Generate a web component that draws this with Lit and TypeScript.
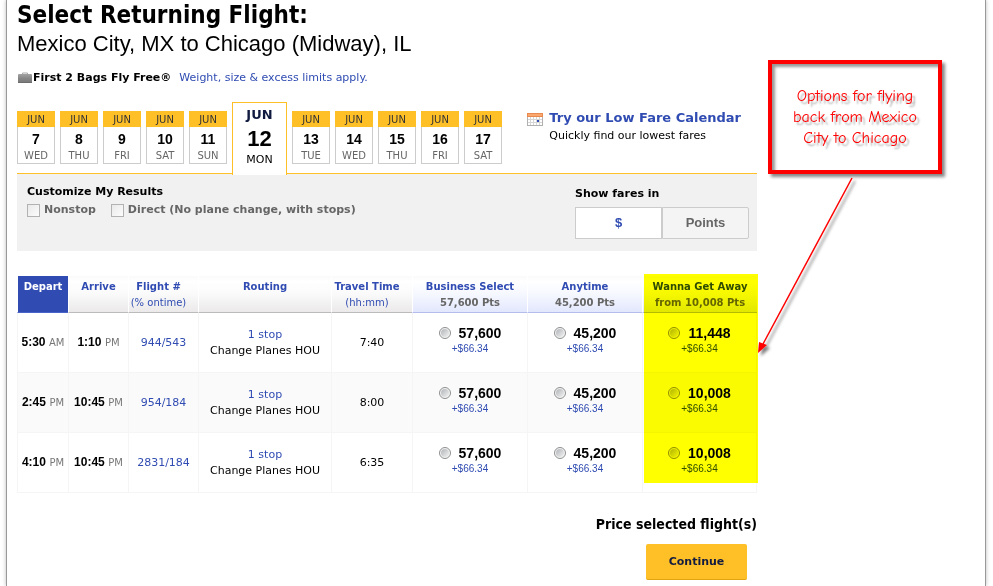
import { LitElement, html, css, svg } from "lit";
import { customElement, state } from "lit/decorators.js";
import { classMap } from "lit/directives/class-map.js";

interface Day { date: number; name: string; }
interface Fare { id: string; pts: string; }
interface Flight {
  depart: [string, string];
  arrive: [string, string];
  number: string;
  time: string;
  fares: Fare[];
}

const DAYS: Day[] = [
  { date: 7, name: "WED" }, { date: 8, name: "THU" }, { date: 9, name: "FRI" },
  { date: 10, name: "SAT" }, { date: 11, name: "SUN" }, { date: 12, name: "MON" },
  { date: 13, name: "TUE" }, { date: 14, name: "WED" }, { date: 15, name: "THU" },
  { date: 16, name: "FRI" }, { date: 17, name: "SAT" },
];

const fares = (wanna: string): Fare[] => [
  { id: "Business Select", pts: "57,600" },
  { id: "Anytime", pts: "45,200" },
  { id: "Wanna Get Away", pts: wanna },
];

const FLIGHTS: Flight[] = [
  { depart: ["5:30", "AM"], arrive: ["1:10", "PM"], number: "944/543", time: "7:40", fares: fares("11,448") },
  { depart: ["2:45", "PM"], arrive: ["10:45", "PM"], number: "954/184", time: "8:00", fares: fares("10,008") },
  { depart: ["4:10", "PM"], arrive: ["10:45", "PM"], number: "2831/184", time: "6:35", fares: fares("10,008") },
];

const bagIcon = svg`<svg class="bag" width="16" height="12" viewBox="0 0 16 12" aria-hidden="true">
  <defs>
    <linearGradient id="leather" x2="0" y2="1">
      <stop offset="0" stop-color="#a2a2a2" /><stop offset="0.5" stop-color="#868686" /><stop offset="1" stop-color="#777" />
    </linearGradient>
  </defs>
  <path d="M5.5 3V1h5v2" fill="none" stroke="#a8a8a8"/>
  <rect x="1" y="2" width="14" height="9" rx="1" fill="url(#leather)"/>
  <path d="M1 10.5h14" stroke="#6c6c6c"/>
</svg>`;

const calendarIcon = svg`<svg class="cal" width="16" height="13" viewBox="0 0 16 13" aria-hidden="true">
  <rect width="16" height="13" fill="#b0b0b0"/>
  <rect width="16" height="4" fill="#e8894f"/>
  <rect x="1" y="1" width="14" height="2" fill="#fba86f"/>
  <rect x="1" y="4" width="14" height="8" fill="#fff"/>
  <path d="M3.5 4v8M6.5 4v8M9.5 4v8M12.5 4v8M1 6.5h14M1 9.5h14" stroke="#d6d6d6"/>
  <rect x="10" y="7" width="2" height="2" fill="#304cb2"/>
</svg>`;

@customElement("app-root")
export class AppRoot extends LitElement {
  @state() private selectedDate = 12;
  @state() private unit = "$";

  static styles = css`
    :host {
      display: block;
      background: #fff;
      color: #000;
      font: 11px/16px "DejaVu Sans", Verdana, sans-serif;
      --blue: #304cb2;
      --gold: #ffbf27;
      --arial: "Liberation Sans", Arial, sans-serif;
      --tahoma: "DejaVu Sans Condensed", Tahoma, sans-serif;
    }
    * { box-sizing: border-box; }
    a { color: var(--blue); text-decoration: none; }
    button { cursor: pointer; }
    h1, h2, p, fieldset { margin: 0; padding: 0; border: 0; }

    .page {
      display: grid;
      grid-template-columns: minmax(0, 1fr) 207px;
      column-gap: 11px;
      margin: 0 7px 0 6px;
      padding: 0 10px 6px;
      border: solid #999;
      border-width: 0 1px;
      box-shadow: 0 0 4px #bbb;
    }
    h1 { font: bold 24px/31px var(--tahoma); }
    h2 { font: 22px/26px var(--arial); }

    .bags { display: flex; align-items: center; margin-top: 13px; }
    .bag { flex: none; }
    .bags a { margin-left: 8px; }

    .dates {
      display: flex;
      align-items: flex-start;
      height: 72px;
      margin-top: 16px;
      border-bottom: 1px solid var(--gold);
    }
    .days { display: flex; align-items: flex-start; gap: 5px; }
    .day {
      display: flex;
      flex-direction: column;
      width: 38px;
      height: 53px;
      margin-top: 9px;
      padding: 0;
      border: 1px solid #ccc;
      border-top: 0;
      background: #fff;
      font: inherit;
      text-align: center;
      color: #666;
      font-size: 10px;
    }
    .month { height: 16px; margin: 0 -1px; background: var(--gold); color: #333; line-height: 18px; }
    .num { font: bold 14px/24px var(--arial); color: #000; }
    .name { line-height: 10px; }
    .day.on {
      position: relative;
      width: 55px;
      height: 73px;
      margin-top: 0;
      border: 1px solid var(--gold);
      border-bottom: 0;
      color: #000;
      font-size: 11px;
    }
    .on .month { height: 24px; background: none; color: #111b40; font-weight: bold; font-size: 13px; line-height: 24px; }
    .on .num { font-size: 22px; }
    .on .name { line-height: 18px; }

    .lowfare { display: flex; gap: 6px; margin: 7px 16px 0 auto; }
    .cal { flex: none; margin-top: 4px; }
    .lowfare a { font-weight: bold; font-size: 13px; line-height: 18px; }
    .lowfare p { line-height: 18px; }

    .filters {
      display: flex;
      justify-content: space-between;
      min-height: 77px;
      padding: 10px 8px 12px 10px;
      background: #f1f1f1;
      font-weight: bold;
    }
    .checks { display: flex; gap: 15px; margin-top: 2px; color: #666; }
    .checks label { display: flex; align-items: center; gap: 4px; }
    input { appearance: none; margin: 0; flex: none; }
    input[type="checkbox"] {
      width: 13px; height: 13px;
      border: 1px solid #b2b2b2;
      background: linear-gradient(135deg, #e9e9e9, #fcfcfc);
    }
    .units { padding-top: 2px; }
    .switch { display: flex; width: 174px; margin-top: 5px; }
    .switch button {
      flex: 1;
      height: 32px;
      border: 1px solid #ccc;
      background: #f4f4f4;
      color: #666;
      font: bold 13px/16px var(--arial);
    }
    .switch button + button { border-radius: 0 2px 2px 0; }
    .switch .on { background: #fff; color: var(--blue); }

    .results { position: relative; margin-top: 25px; }
    table { width: 100%; table-layout: fixed; border-spacing: 0; text-align: center; }
    th, td { padding: 0; border-left: 1px solid #f5f5f5; }
    th {
      height: 37px;
      border-left-color: #fff;
      border-bottom: 1px solid #bbb;
      background: linear-gradient(#fafafa, #fff 15%, #fafafa 50%, #ebe9e9);
      color: var(--blue);
      font-size: 10px;
      vertical-align: top;
      padding-top: 3px;
      white-space: nowrap;
    }
    th.fare { background: linear-gradient(#fafafa, #fff 15%, #f6f8ff 50%, #e2e7fd); border-bottom-color: #b3bcea; }
    th.sorted { background: var(--blue); border-bottom-color: #4a63c8; color: #fff; }
    th.sortable { padding-right: 10px; }
    th small { display: block; font-size: 10px; font-weight: normal; }
    th.fare small { color: #666; font-weight: bold; }
    td { height: 60px; border-bottom: 1px solid #f5f5f5; white-space: nowrap; }
    td:last-child { border-right: 1px solid #f5f5f5; }
    tr:nth-child(even) td { background: #fafafa; }
    .clock { font: bold 12px/16px var(--arial); }
    .ampm { font: 10px/16px "DejaVu Sans", sans-serif; color: #777; }
    .c1 { width: 51px; } .c2 { width: 60px; } .c3 { width: 70px; } .c4 { width: 133px; }
    .c5 { width: 81px; } .c6 { width: 115px; }
    .pick { display: flex; align-items: center; justify-content: center; gap: 8px; font: bold 14px/16px var(--arial); }
    input[type="radio"] {
      width: 12px; height: 12px;
      padding: 1px;
      border: 1px solid #8e8f8f;
      border-radius: 50%;
      background: linear-gradient(135deg, #b0b4b8, #f2f2f2) content-box, #f4f4f4;
    }
    input[type="radio"]:checked { background: radial-gradient(#304cb2 40%, #f4f4f4 45%); }
    .tax { margin-bottom: 4px; color: var(--blue); font: 10px/16px var(--arial); }
    .marker {
      position: absolute;
      top: -2px; right: -1px; bottom: 10px;
      width: 114px;
      background: #ff0;
      mix-blend-mode: multiply;
      pointer-events: none;
    }

    .checkout { display: flex; flex-direction: column; align-items: flex-end; margin-top: 21px; }
    .checkout p { font: bold 14px/20px var(--tahoma); }
    .continue {
      width: 101px; height: 36px;
      margin: 10px 10px 0 0;
      border: 0;
      border-bottom: 1px solid #dfa410;
      border-radius: 2px;
      background: var(--gold);
      color: #111b40;
      font: bold 11px/16px "DejaVu Sans", sans-serif;
    }

    aside { position: relative; padding-top: 60px; }
    .note {
      display: grid;
      place-items: center;
      width: 174px;
      height: 114px;
      border: 4px solid #f00;
      box-shadow: 3px 3px 3px #888, inset 3px 3px 3px #999;
      color: #f00;
      font: 16px/21px "Comic Sans MS", "Comic Neue", cursive;
      text-align: center;
      text-shadow: 3px 3px 2px #aaa;
    }
    .arrow { position: absolute; left: -18px; top: 170px; pointer-events: none; }
  `;

  private day(d: Day) {
    const on = d.date === this.selectedDate;
    return html`<button class=${classMap({ day: true, on })} @click=${() => (this.selectedDate = d.date)}>
      <span class="month">JUN</span><span class="num">${d.date}</span><span class="name">${d.name}</span>
    </button>`;
  }

  private fare(f: Fare, row: number) {
    return html`<td>
      <label class="pick"><input type="radio" name="fare" value="${f.id} ${row}" />${f.pts}</label>
      <p class="tax">+$66.34</p>
    </td>`;
  }

  private flight(f: Flight, row: number) {
    return html`<tr>
      <td><span class="clock">${f.depart[0]}</span> <span class="ampm">${f.depart[1]}</span></td>
      <td><span class="clock">${f.arrive[0]}</span> <span class="ampm">${f.arrive[1]}</span></td>
      <td><a href="#flight">${f.number}</a></td>
      <td><a href="#stops">1 stop</a><p>Change Planes HOU</p></td>
      <td>${f.time}</td>
      ${f.fares.map((x) => this.fare(x, row))}
    </tr>`;
  }

  private unitButton(u: string) {
    return html`<button class=${classMap({ on: this.unit === u })} @click=${() => (this.unit = u)}>${u}</button>`;
  }

  render() {
    return html`<div class="page">
      <main>
        <h1>Select Returning Flight:</h1>
        <h2>Mexico City, MX to Chicago (Midway), IL</h2>
        <div class="bags">${bagIcon}<b>First 2 Bags Fly Free®</b><a href="#bags">Weight, size &amp; excess limits apply.</a></div>

        <div class="dates">
          <div class="days">${DAYS.map((d) => this.day(d))}</div>
          <div class="lowfare">
            ${calendarIcon}
            <div><a href="#calendar">Try our Low Fare Calendar</a><p>Quickly find our lowest fares</p></div>
          </div>
        </div>

        <div class="filters">
          <fieldset>
            <div>Customize My Results</div>
            <div class="checks">
              <label><input type="checkbox" />Nonstop</label>
              <label><input type="checkbox" />Direct (No plane change, with stops)</label>
            </div>
          </fieldset>
          <div class="units">
            <div>Show fares in</div>
            <div class="switch">${this.unitButton("$")}${this.unitButton("Points")}</div>
          </div>
        </div>

        <div class="results">
          <table>
            <colgroup>
              <col class="c1" /><col class="c2" /><col class="c3" /><col class="c4" /><col class="c5" />
              <col class="c6" /><col class="c6" /><col class="c6" />
            </colgroup>
            <thead>
              <tr>
                <th class="sorted">Depart</th>
                <th>Arrive</th>
                <th class="sortable">Flight #<small>(% ontime)</small></th>
                <th>Routing</th>
                <th class="sortable">Travel Time<small>(hh:mm)</small></th>
                <th class="fare">Business Select<small>57,600 Pts</small></th>
                <th class="fare">Anytime<small>45,200 Pts</small></th>
                <th class="fare">Wanna Get Away<small>from 10,008 Pts</small></th>
              </tr>
            </thead>
            <tbody>${FLIGHTS.map((f, i) => this.flight(f, i))}</tbody>
          </table>
          <div class="marker"></div>
        </div>

        <div class="checkout">
          <p>Price selected flight(s)</p>
          <button class="continue">Continue</button>
        </div>
      </main>

      <aside>
        <div class="note">Options for flying<br />back from Mexico<br />City to Chicago</div>
        <svg class="arrow" width="120" height="195" viewBox="0 0 120 195" aria-hidden="true">
          <defs>
            <filter id="soft" x="-20%" y="-20%" width="140%" height="140%">
              <feDropShadow dx="3" dy="3" stdDeviation="1.5" flood-color="#000" flood-opacity="0.5" />
            </filter>
          </defs>
          <g filter="url(#soft)">
            <path d="M102 8L13 174" stroke="#f00" stroke-width="1.5" />
            <path d="M8 183L9 172L17 175Z" fill="#f00" />
          </g>
        </svg>
      </aside>
    </div>`;
  }
}
